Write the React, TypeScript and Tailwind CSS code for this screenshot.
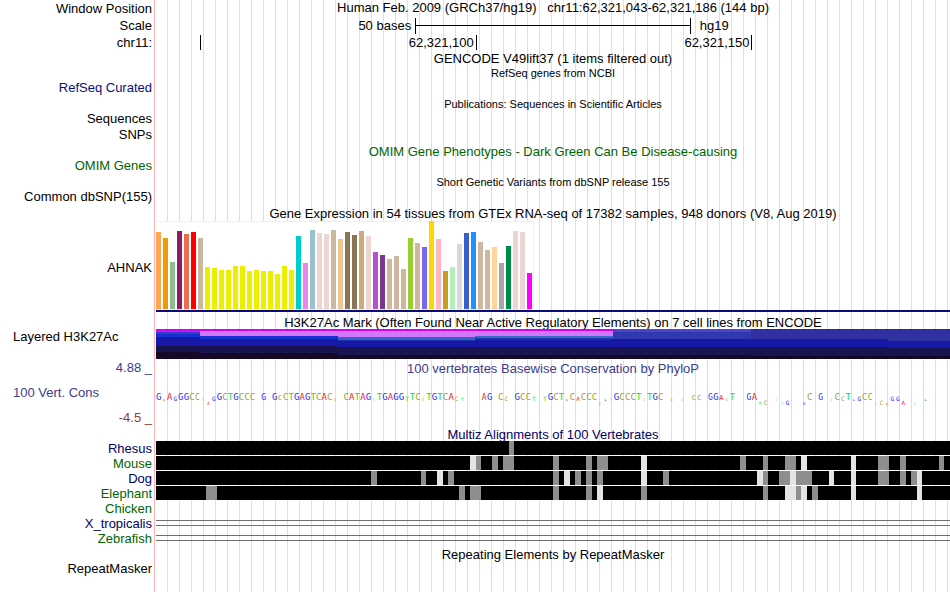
import type { ReactNode } from "react";

const BASES = 144;

const BASE_COLOR: Record<string, string> = {
  A: "text-[#ff2020]",
  C: "text-[#a0a020]",
  G: "text-[#2828ff]",
  T: "text-[#00e818]",
};

// one entry per base of the window: letter + score, "-" for no data
const CONSERVATION =
  "G11 A1 A8 G4 G22 G22 C16 C6 T1 A-3 G4 G13 C9 T11 G22 C14 C16 C16 - G6 - G7 C5 C7 T18 G22 A20 G22 T18 C16 " +
  "A20 C17 C3 - C12 A20 T18 A13 G14 T2 T11 G14 A12 G20 G22 T4 T17 C12 C3 T8 G11 T8 C12 A8 C4 T3 - - - A6 " +
  "G14 - C7 C4 - G7 C17 C17 T4 - T4 G9 C10 T7 A1 C7 A4 C9 C7 C11 C-3 G1 T2 G12 C17 C7 C17 T17 C1 T11 " +
  "G9 C10 - C3 - C1 - C5 C5 - G6 G8 A5 C3 T6 - - G6 A8 T-3 C-4 - C1 T-2 G-4 - - G-3 C7 - " +
  "G6 - C1 C7 C4 T7 G1 G4 C17 C6 C-1 C-4 A-1 G4 G4 A-4 - T-2 - G1 - - - -";

const TISSUES: [string, number][] = [
  ["#ffa54f", 77], ["#ee9a00", 71], ["#8fbc8f", 47], ["#8b1c62", 78], ["#ee6a50", 75], ["#ff0000", 77],
  ["#cdb79e", 71], ["#eeee00", 42], ["#eeee00", 41], ["#eeee00", 39], ["#eeee00", 39], ["#eeee00", 43],
  ["#eeee00", 43], ["#eeee00", 38], ["#eeee00", 39], ["#eeee00", 38], ["#eeee00", 38], ["#eeee00", 35],
  ["#eeee00", 43], ["#eeee00", 39], ["#00cdcd", 73], ["#ee82ee", 46], ["#9ac0cd", 79], ["#eed5d2", 76],
  ["#eed5d2", 75], ["#cdb79e", 79], ["#eec591", 70], ["#8b7355", 77], ["#8b7355", 74], ["#cdaa7d", 78],
  ["#eed5d2", 73], ["#b452cd", 57], ["#7a378b", 54], ["#cdb79e", 50], ["#cdb79e", 53], ["#cdb79e", 40],
  ["#9acd32", 71], ["#cdb79e", 66], ["#7a67ee", 62], ["#ffd700", 88], ["#ffb6c1", 70], ["#cd9b1d", 38],
  ["#b4eeb4", 42], ["#d9d9d9", 65], ["#3a5fcd", 76], ["#1e90ff", 77], ["#cdb79e", 67], ["#cdb79e", 59],
  ["#ffd39b", 62], ["#a6a6a6", 46], ["#008b45", 63], ["#eed5d2", 78], ["#eed5d2", 77], ["#ff00ff", 36],
];

// stacked signal layers, top to bottom; span is the segment's share of the track
const H3K27AC: { span: number; layers: [string, number][] }[] = [
  { span: 44, layers: [["#d200ff", 2], ["#7040ff", 1], ["#3040c8", 2], ["#1830d0", 3], ["#1818a8", 9], ["#181450", 6], ["#180828", 7]] },
  { span: 138, layers: [["#d200ff", 2], ["#d278ff", 5], ["#1830d0", 3], ["#1818a8", 7], ["#181450", 7], ["#180828", 6]] },
  { span: 137, layers: [["#d200ff", 2], ["#d278ff", 6], ["#3064c8", 3], ["#2030a8", 1], ["#1818a8", 6], ["#181450", 8], ["#180828", 4]] },
  { span: 138, layers: [["#d200ff", 2], ["#d278ff", 5], ["#3868c8", 2], ["#2030a8", 2], ["#1818a8", 7], ["#181450", 8], ["#180828", 4]] },
  { span: 138, layers: [["#d200ff", 1], ["#5040c8", 2], ["#3038b0", 7], ["#1818a8", 8], ["#181450", 8], ["#180828", 4]] },
  { span: 137, layers: [["#7000b0", 1], ["#3030a0", 9], ["#1818a8", 8], ["#181450", 9], ["#180828", 3]] },
  { span: 62, layers: [["#7000b0", 1], ["#3030a0", 11], ["#1818a8", 7], ["#181450", 8], ["#180828", 3]] },
];

const SPECIES: { name: string; color: string; gray: number[]; light: number[] }[] = [
  { name: "Rhesus", color: "text-[#000064]", gray: [64], light: [] },
  {
    name: "Mouse",
    color: "text-[#006400]",
    gray: [58, 61, 63, 64, 72, 78, 80, 81, 106, 110, 114, 115, 131, 132, 135, 142],
    light: [57, 88, 117, 126],
  },
  {
    name: "Dog",
    color: "text-[#000064]",
    gray: [39, 48, 53, 72, 76, 78, 80, 92, 110, 113, 114, 116, 117, 118, 131, 132, 135, 137],
    light: [51, 74, 88, 109, 115, 122, 126, 138],
  },
  {
    name: "Elephant",
    color: "text-[#006400]",
    gray: [9, 10, 55, 57, 58, 72, 78, 88, 110, 116, 119],
    light: [80, 114, 115, 117, 126, 138],
  },
];

function Row({
  label,
  labelClass = "justify-end",
  className = "",
  children,
}: {
  label?: ReactNode;
  labelClass?: string;
  className?: string;
  children?: ReactNode;
}) {
  return (
    <div className={`flex ${className}`}>
      <div className={`flex w-[154px] shrink-0 pr-[2px] ${labelClass}`}>{label}</div>
      <div className="min-w-0 flex-1 border-l border-[#ffb4b4] pl-px">{children}</div>
    </div>
  );
}

function Title({ small, className = "", children }: { small?: boolean; className?: string; children: ReactNode }) {
  return (
    <h2 className={`text-center leading-[15px] whitespace-pre ${small ? "text-[11px]" : "text-[13px]"} ${className}`}>
      {children}
    </h2>
  );
}

function ScaleBar() {
  return (
    <div className="grid h-[17px] grid-cols-[47fr_50fr_47fr] items-center">
      <div className="pr-1 text-right">50 bases</div>
      <div className="flex h-4 items-center border-x border-black">
        <div className="h-px w-full bg-black" />
      </div>
      <div className="pl-[9px]">hg19</div>
    </div>
  );
}

function Ruler() {
  return (
    <div className="grid h-[17px] grid-cols-[8fr_50fr_50fr_36fr] items-center">
      <div />
      <div className="h-[15px] border-l border-black pr-[2px] text-right">62,321,100</div>
      <div className="h-[15px] border-l border-black pr-[2px] text-right">62,321,150</div>
      <div className="h-[15px] border-l border-black" />
    </div>
  );
}

function ExpressionChart() {
  return (
    <div>
      <div className="flex h-[89px] w-[378px] items-end gap-[2px] border border-l-0 border-[#f0f0f0] bg-white">
        {TISSUES.map(([color, height], i) => (
          <div key={i} className="w-[5px] shrink-0" style={{ height, backgroundColor: color }} />
        ))}
      </div>
      <div className="h-[2px] bg-[#0c0c78]" />
    </div>
  );
}

function HistoneMarks() {
  return (
    <div className="flex h-[30px]">
      {H3K27AC.map((seg, i) => (
        <div key={i} className="flex flex-col" style={{ flex: seg.span }}>
          {seg.layers.map(([color, height], j) => (
            <div key={j} style={{ height, backgroundColor: color }} />
          ))}
        </div>
      ))}
    </div>
  );
}

function ConservationLogo() {
  return (
    <div className="flex font-['DejaVu_Sans_Mono',monospace]">
      {CONSERVATION.split(" ").map((entry, i) => {
        const letter = entry[0];
        const score = Number(entry.slice(1)) || 0;
        const size = Math.min(9, Math.max(3, Math.round(Math.abs(score) * 1.4)));
        return (
          <div
            key={i}
            className={`flex h-[33px] w-0 flex-1 items-end justify-center ${score < 0 ? "pb-[3px]" : "pb-[7px]"}`}
          >
            {letter !== "-" && (
              <span className={`leading-none ${BASE_COLOR[letter]}`} style={{ fontSize: size }}>
                {letter}
              </span>
            )}
          </div>
        );
      })}
    </div>
  );
}

function Alignment({ gray, light }: { gray: number[]; light: number[] }) {
  return (
    <div className="grid h-[14px] grid-cols-[repeat(144,minmax(0,1fr))] grid-rows-1 bg-black">
      {Array.from({ length: BASES }, (_, i) => (
        <div key={i} className={light.includes(i) ? "bg-[#e4e4e4]" : gray.includes(i) ? "bg-[#8e8e8e]" : ""} />
      ))}
    </div>
  );
}

function DoubleLine() {
  return <div className="mt-1 h-[6px] border-y border-[#707070]" />;
}

export default function App() {
  return (
    <main className="flex min-h-screen flex-col overflow-hidden bg-white bg-[repeating-linear-gradient(to_right,transparent_0_11px,#dcdcf8_11px_12px)] bg-[length:calc(100%-156px)_100%] bg-right bg-no-repeat font-['Liberation_Sans',Arial,sans-serif] text-[13px] leading-[15px] text-black">
      {/* Position, scale and ruler */}
      <Row label="Window Position" labelClass="items-center justify-end" className="h-[17px]">
        <Title>{"Human Feb. 2009 (GRCh37/hg19)   chr11:62,321,043-62,321,186 (144 bp)"}</Title>
      </Row>
      <Row label="Scale" labelClass="items-center justify-end" className="h-[17px]">
        <ScaleBar />
      </Row>
      <Row label="chr11:" labelClass="items-center justify-end" className="h-[17px]">
        <Ruler />
      </Row>

      {/* Gene and variant tracks */}
      <Row className="h-[15px]">
        <Title>GENCODE V49lift37 (1 items filtered out)</Title>
      </Row>
      <Row className="h-[14px]">
        <Title small>RefSeq genes from NCBI</Title>
      </Row>
      <Row label="RefSeq Curated" labelClass="justify-end text-[#0c0c78]" className="h-[17px]" />
      <Row className="h-[14px]">
        <Title small>Publications: Sequences in Scientific Articles</Title>
      </Row>
      <Row label="Sequences" className="h-4" />
      <Row label="SNPs" className="h-[17px]" />
      <Row className="h-[14px]">
        <Title className="text-[#006400]">OMIM Gene Phenotypes - Dark Green Can Be Disease-causing</Title>
      </Row>
      <Row label="OMIM Genes" labelClass="justify-end text-[#006400]" className="h-[17px]" />
      <Row className="h-[14px]">
        <Title small>Short Genetic Variants from dbSNP release 155</Title>
      </Row>
      <Row label="Common dbSNP(155)" className="h-[17px]" />

      {/* GTEx */}
      <Row className="h-[15px]">
        <Title>Gene Expression in 54 tissues from GTEx RNA-seq of 17382 samples, 948 donors (V8, Aug 2019)</Title>
      </Row>
      <Row label="AHNAK" labelClass="items-center justify-end pb-[2px]" className="h-[94px]">
        <ExpressionChart />
      </Row>

      {/* ENCODE regulation */}
      <Row className="h-[14px]">
        <Title>H3K27Ac Mark (Often Found Near Active Regulatory Elements) on 7 cell lines from ENCODE</Title>
      </Row>
      <Row label="Layered H3K27Ac" labelClass="pl-[13px]" className="h-[31px]">
        <HistoneMarks />
      </Row>

      {/* PhyloP */}
      <Row
        className="h-[67px]"
        labelClass="flex-col gap-[10px] text-[#3c3c8c]"
        label={
          <>
            <span className="text-right">4.88 _</span>
            <span className="pl-[13px]">100 Vert. Cons</span>
            <span className="text-right text-[#8c3c3c]">-4.5 _</span>
          </>
        }
      >
        <Title className="pt-px text-[#3c3c8c]">100 vertebrates Basewise Conservation by PhyloP</Title>
        <ConservationLogo />
      </Row>

      {/* Multiz */}
      <Row className="h-[14px]">
        <Title className="text-[#000064]">Multiz Alignments of 100 Vertebrates</Title>
      </Row>
      {SPECIES.map((s) => (
        <Row key={s.name} label={s.name} labelClass={`justify-end ${s.color}`} className="h-[15px]">
          <Alignment gray={s.gray} light={s.light} />
        </Row>
      ))}
      <Row label="Chicken" labelClass="justify-end text-[#006400]" className="h-[15px]" />
      <Row label="X_tropicalis" labelClass="justify-end text-[#000064]" className="h-[15px]">
        <DoubleLine />
      </Row>
      <Row label="Zebrafish" labelClass="justify-end text-[#006400]" className="h-4">
        <DoubleLine />
      </Row>

      {/* RepeatMasker */}
      <Row className="h-[14px]">
        <Title>Repeating Elements by RepeatMasker</Title>
      </Row>
      <Row label="RepeatMasker" className="flex-1" />
    </main>
  );
}
